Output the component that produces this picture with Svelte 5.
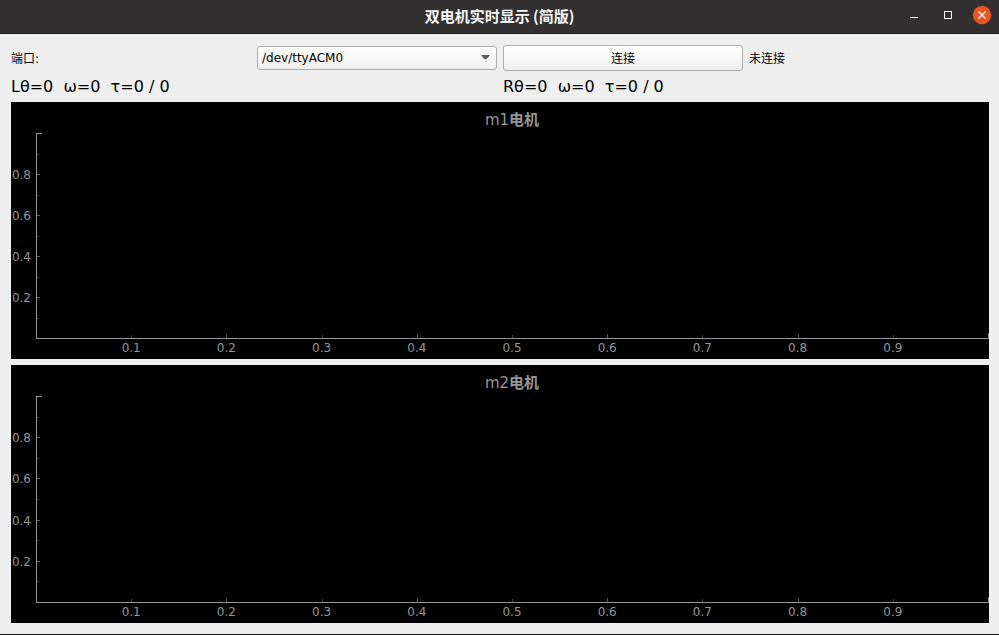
<script>
  const ports = ['/dev/ttyACM0'];
  const plots = ['m1', 'm2'];
  const tenths = [1, 2, 3, 4, 5, 6, 7, 8, 9];
  let port = $state(ports[0]);
</script>

<div class="window">
  <header class="titlebar">
    <h1>双电机实时显示 (简版)</h1>
    <div class="controls">
      <button aria-label="最小化">
        <svg width="20" height="20" viewBox="0 0 20 20"><path d="M6 12.5h8" stroke="#fff" /></svg>
      </button>
      <button aria-label="最大化">
        <svg width="20" height="20" viewBox="0 0 20 20"><rect x="6.5" y="6.5" width="7" height="7" fill="none" stroke="#fff" /></svg>
      </button>
      <button aria-label="关闭">
        <svg width="20" height="20" viewBox="0 0 20 20">
          <circle cx="10" cy="10" r="9.2" fill="#e95420" />
          <path d="M6.5 6.5l7 7M13.5 6.5l-7 7" stroke="#fff" stroke-width="1.3" />
        </svg>
      </button>
    </div>
  </header>

  <main>
    <div class="form">
      <label for="port">端口:</label>
      <div class="combo">
        <select id="port" bind:value={port}>
          {#each ports as p}<option value={p}>{p}</option>{/each}
        </select>
        <svg class="arrow" width="9" height="5" viewBox="0 0 9 5"><path d="M0 0h9L5.5 4.2h-2z" fill="#5a5a5a" /></svg>
      </div>
      <button class="connect">连接</button>
      <span class="status">未连接</span>
      <output>Lθ=0&nbsp; ω=0&nbsp; τ=0 / 0</output>
      <output>Rθ=0&nbsp; ω=0&nbsp; τ=0 / 0</output>
    </div>

    {#each plots as name}
      <section class="plot">
        <h2>{name}<b>电机</b></h2>
        <div class="canvas">
          <svg class="axes">
            <rect class="axis" width="1" height="100%" />
            <rect class="axis" y="100%" width="100%" height="1" />
            <rect class="axis" width="6" height="1" />
            <rect class="axis" x="100%" y="100%" width="1" height="6" transform="translate(0 -5)" />
            {#each tenths as t}
              {@const major = t % 2 === 0}
              <rect class:major class="tick" x="1" y="{100 - t * 10}%" width={major ? 3 : 2} height="1" />
              <rect class:major class="tick" x="{t * 10}%" y="100%" width="1" height={major ? 4 : 3} transform="translate(0 {major ? -4 : -3})" />
              {#if major}
                <text class="ylabel" x="-5" y="{100 - t * 10}%" dy="5">0.{t}</text>
              {/if}
              <text class="xlabel" x="{t * 10}%" y="100%" dy="14">0.{t}</text>
            {/each}
          </svg>
        </div>
      </section>
    {/each}
  </main>
</div>

<style>
  :global(body) {
    margin: 0;
  }
  .window {
    box-sizing: border-box;
    min-height: 100vh;
    display: flex;
    flex-direction: column;
    background: #efefef;
    color: #000;
    border-bottom: 1px solid #151515;
    font: 12px/14px 'DejaVu Sans', 'Noto Sans CJK SC', sans-serif;
  }
  .titlebar {
    display: grid;
    grid-template-columns: 1fr auto 1fr;
    align-items: center;
    height: 33px;
    padding: 0 7px;
    background: #323030;
    border-bottom: 1px solid #1a181a;
  }
  h1 {
    grid-column: 2;
    margin: 0;
    padding-bottom: 2px;
    color: #f7f7f7;
    font: bold 15px/20px 'Noto Sans CJK SC', sans-serif;
  }
  .controls {
    display: flex;
    justify-content: flex-end;
    gap: 14px;
    padding-bottom: 3px;
  }
  .controls button {
    width: 20px;
    height: 20px;
    padding: 0;
    border: 0;
    background: none;
  }
  .controls svg {
    display: block;
  }
  main {
    flex: 1;
    display: flex;
    flex-direction: column;
    gap: 6px;
    padding: 11px 10px 11px 11px;
  }
  .form {
    display: grid;
    grid-template-columns: repeat(4, 1fr);
    grid-template-rows: 26px 19px;
    gap: 6px;
    align-items: center;
  }
  label,
  .status {
    padding-top: 2px;
  }
  output {
    grid-column: span 2;
    font-size: 16px;
    line-height: 19px;
  }
  .combo {
    position: relative;
    display: flex;
  }
  select,
  .connect {
    box-sizing: border-box;
    width: 100%;
    border: 1px solid #adadad;
    border-radius: 3px;
    background: linear-gradient(#fff, #efefef);
    color: #000;
    font: inherit;
  }
  select {
    appearance: none;
    height: 24px;
    padding: 0 20px 0 4px;
  }
  .connect {
    height: 26px;
    padding: 2px 0 0;
  }
  .arrow {
    position: absolute;
    right: 7px;
    top: 9px;
    pointer-events: none;
  }
  .plot {
    flex: 1 1 0px;
    display: flex;
    flex-direction: column;
    background: #000;
    color: #969696;
  }
  /* the last plot takes the odd pixel, so both start on a whole one */
  .plot:last-child {
    flex-basis: 1px;
  }
  h2 {
    box-sizing: border-box;
    margin: 0;
    height: 31px;
    padding: 1px 1px 0 25px;
    text-align: center;
    font-size: 15px;
    font-weight: normal;
    line-height: 35px;
  }
  .canvas {
    flex: 1;
    display: grid;
    padding: 0 1px 21px 25px;
  }
  .axes {
    width: 100%;
    height: 100%;
    min-height: 0;
    contain: size;
    overflow: visible;
    shape-rendering: crispEdges;
  }
  .axis {
    fill: #969696;
  }
  .tick {
    fill: #3c3c3c;
  }
  .tick.major {
    fill: #5a5a5a;
  }
  text {
    fill: #969696;
  }
  .ylabel {
    text-anchor: end;
  }
  .xlabel {
    text-anchor: middle;
  }
</style>
